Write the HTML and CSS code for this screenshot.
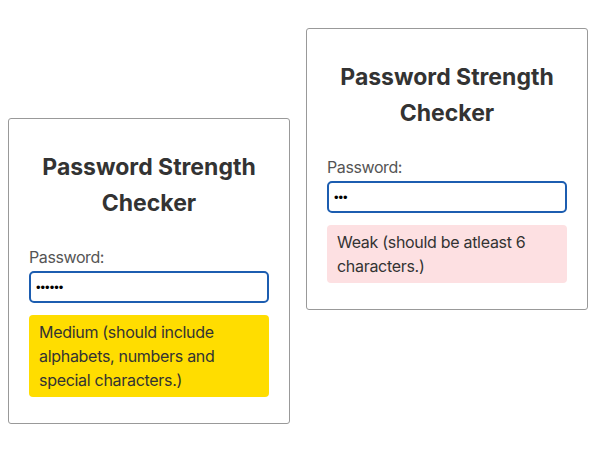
FILE: index.html
```html
<!DOCTYPE html>
<html>
<head>
<meta charset="utf-8">
<link rel="stylesheet" href="styles.css">
</head>
<body>
<div class="row">
  <div class="card card-low">
    <h2 class="title">Password Strength Checker</h2>
    <label class="label" for="p1">Password:</label>
    <input class="field" id="p1" type="password" value="abcdef">
    <div class="alert alert-medium">Medium (should include alphabets, numbers and special characters.)</div>
  </div>
  <div class="card card-high">
    <h2 class="title">Password Strength Checker</h2>
    <label class="label" for="p2">Password:</label>
    <input class="field" id="p2" type="password" value="abc">
    <div class="alert alert-weak">Weak (should be atleast 6 characters.)</div>
  </div>
</div>
</body>
</html>
```
FILE: styles.css
```css
body {
  margin: 8px;
  background: #fff;
  font-family: Inter, "Noto Sans", sans-serif;
  color: #333;
}
.row {
  display: flex;
  align-items: flex-start;
  gap: 16px;
}
.card {
  width: 240px;
  padding: 20px 20px 26px;
  border: 1px solid #999;
  border-radius: 3px;
  display: flex;
  flex-direction: column;
}
.card-low { margin-top: 110px; }
.card-high { margin-top: 20px; }
.title {
  margin: 10px 0 26px;
  font-size: 23px;
  line-height: 36px;
  font-weight: 700;
  text-align: center;
  color: #333;
}
.label {
  font-size: 16px;
  line-height: 20px;
  letter-spacing: -0.4px;
  color: #555;
  margin-bottom: 4px;
}
.field {
  box-sizing: border-box;
  width: 240px;
  height: 32px;
  margin: 0 0 12px;
  padding: 0 5px;
  border: 2px solid #1c5db0;
  border-radius: 5px;
  font-family: "Liberation Sans", Arial, sans-serif;
  font-size: 13px;
  color: #000;
  outline: none;
}
.alert {
  padding: 5px 10px;
  border-radius: 4px;
  font-size: 16px;
  line-height: 24px;
  letter-spacing: -0.3px;
  color: #333;
}
.alert-medium { background: #ffdd00; }
.alert-weak { background: #fde0e2; }
```
